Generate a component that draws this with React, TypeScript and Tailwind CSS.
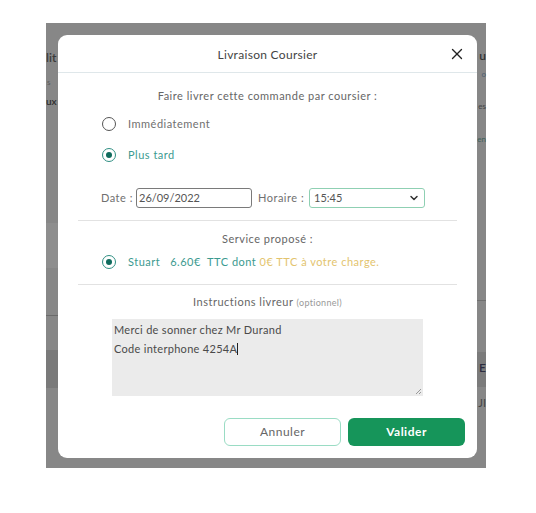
import React from 'react';
import { X, ChevronDown } from 'lucide-react';

function Radio({ checked }: { checked?: boolean }) {
  return checked ? (
    <span className="w-[14px] h-[14px] rounded-full border-[1.5px] border-[#2f8f83] flex items-center justify-center shrink-0">
      <span className="w-[6px] h-[6px] rounded-full bg-[#0f6b5d]" />
    </span>
  ) : (
    <span className="w-[14px] h-[14px] rounded-full border-[1.5px] border-[#555] shrink-0" />
  );
}

export default function App() {
  return (
    <div
      className="w-[536px] h-[513px] bg-white pt-[23px] pl-[46px]"
      style={{ fontFamily: 'Lato, "Noto Sans", sans-serif' }}
    >
      {/* dimmed page behind the dialog */}
      <div className="relative w-[440px] h-[445px] bg-[#878787] pt-[12px] pl-[12px]">
        <div className="absolute left-0 top-[26px] text-[12px] text-[#3a3a3a] font-semibold">lit</div>
        <div className="absolute left-[1px] top-[53px] text-[8px] text-[#5a5a5a]">s</div>
        <div className="absolute left-0 top-[71px] text-[10px] text-[#2e2e2e] font-semibold">ux</div>
        <div className="absolute left-0 top-[200px] w-[12px] h-[45px] bg-[#8e8e8e]" />
        <div className="absolute left-0 top-[292px] w-[12px] h-px bg-[#6a6a6a]" />
        <div className="absolute left-0 top-[327px] w-[12px] h-[38px] bg-[#7a7a7a]" />
        <div className="absolute right-0 top-[24px] text-[12px] text-[#333] font-semibold">u</div>
        <div className="absolute right-0 top-[45px] text-[8px] text-[#4c5e70]">o</div>
        <div className="absolute right-0 top-[77px] text-[8px] text-[#444]">es</div>
        <div className="absolute right-0 top-[110px] text-[8px] text-[#3d5f58]">en</div>
        <div className="absolute right-0 top-[277px] w-[9px] h-px bg-[#6f6f6f]" />
        <div className="absolute right-0 top-[329px] w-[9px] h-[35px] bg-[#7b7b7b]" />
        <div className="absolute right-0 top-[336px] text-[12px] text-[#2c2c40] font-semibold">E</div>
        <div className="absolute right-0 top-[372px] text-[11px] text-[#444]">JI</div>

        {/* dialog */}
        <div className="relative w-[419px] h-[423px] bg-white rounded-[9px] flex flex-col text-[11px] tracking-[0.5px] text-[#666]">
          <div className="h-[38px] shrink-0 flex items-center justify-center relative border-b border-[#dfe7ea]">
            <span className="text-[12px] tracking-[0.3px] text-[#444] pt-[2px]">Livraison Coursier</span>
            <X className="absolute right-[11px] top-[10px] text-[#222]" size={18} strokeWidth={1.8} />
          </div>

          <div className="h-[20px] mt-[13px] shrink-0 flex items-center justify-center">
            Faire livrer cette commande par coursier :
          </div>

          <div className="h-[20px] mt-[8px] shrink-0 flex items-center gap-[12px] pl-[44px]">
            <Radio />
            <span className="text-[#707070]">Immédiatement</span>
          </div>
          <div className="h-[20px] mt-[11px] shrink-0 flex items-center gap-[12px] pl-[44px]">
            <Radio checked />
            <span className="text-[#3c9a90]">Plus tard</span>
          </div>

          <div className="h-[20px] mt-[23px] shrink-0 flex items-center pl-[43px] text-[#707070]">
            <span className="w-[35px]">Date :</span>
            <div className="w-[116px] h-[20px] border-[1.5px] border-[#7a7a7a] rounded-[3px] flex items-center px-[2px] tracking-normal text-[#555]">
              26/09/2022
            </div>
            <span className="w-[57px] pl-[6px]">Horaire :</span>
            <div className="w-[116px] h-[20px] border-[1.5px] border-[#8fd0b3] rounded-[3px] flex items-center justify-between px-[4px] tracking-normal text-[#555]">
              <span>15:45</span>
              <ChevronDown size={12} strokeWidth={3} className="text-[#333]" />
            </div>
          </div>

          <div className="mx-[20px] mt-[12px] border-t border-[#e2e2e2]" />

          <div className="h-[20px] mt-[8px] shrink-0 flex items-center justify-center">
            Service proposé :
          </div>
          <div className="h-[20px] mt-[3px] shrink-0 flex items-center gap-[12px] pl-[44px]">
            <Radio checked />
            <span className="text-[#3c9a90]">
              Stuart&nbsp;&nbsp; 6.60€&nbsp; TTC dont <span className="text-[#e3c46e]">0€ TTC à votre charge.</span>
            </span>
          </div>

          <div className="mx-[20px] mt-[12px] border-t border-[#e2e2e2]" />

          <div className="h-[20px] mt-[7px] shrink-0 flex items-center justify-center">
            <span>
              Instructions livreur <span className="text-[9px] tracking-[0.3px] text-[#999]">(optionnel)</span>
            </span>
          </div>

          <div className="ml-[54px] mt-[7px] w-[311px] h-[77px] shrink-0 bg-[#ebebeb] relative px-[2px] pt-[1px] leading-[19px] tracking-[0.3px] text-[#4a4a4a]">
            <div>Merci de sonner chez Mr Durand</div>
            <div>
              Code interphone 4254A<span className="inline-block w-px h-[12px] bg-[#222] align-[-2px]" />
            </div>
            <svg className="absolute right-[1px] bottom-[1px]" width="7" height="7" viewBox="0 0 7 7">
              <path d="M6 1 L1 6 M6 4 L4 6" stroke="#999" strokeWidth="1" />
            </svg>
          </div>

          <div className="flex justify-end gap-[7px] pr-[12px] mt-[22px] shrink-0">
            <button className="w-[117px] h-[28px] rounded-[6px] border border-[#9adcc4] bg-white text-[12px] text-[#666]">
              Annuler
            </button>
            <button className="w-[117px] h-[28px] rounded-[6px] bg-[#16955a] text-[12px] font-bold text-white">
              Valider
            </button>
          </div>
        </div>
      </div>
    </div>
  );
}
